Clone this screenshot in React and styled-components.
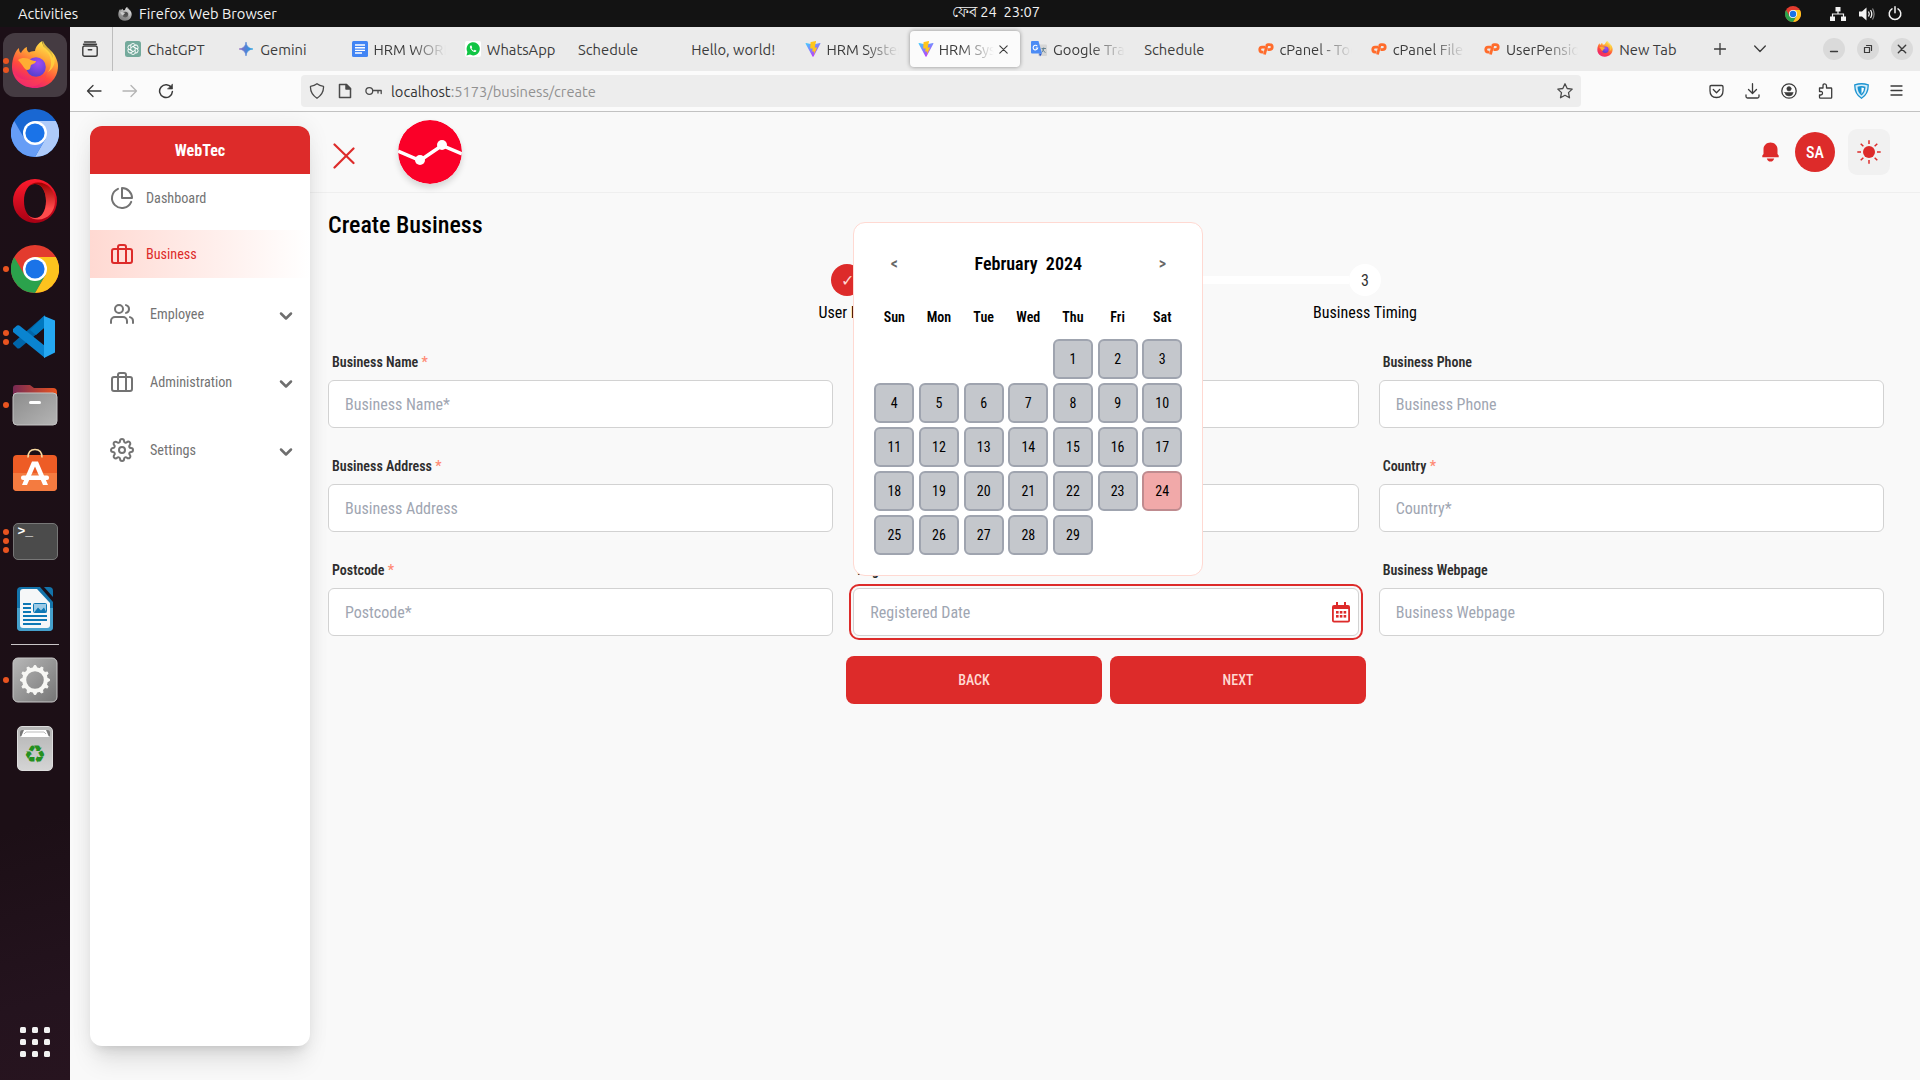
import React from "react";
import styled, { createGlobalStyle, css } from "styled-components";
import { FiPieChart, FiBriefcase, FiUsers, FiSettings, FiChevronDown } from "react-icons/fi";

const RED = "#dd2b2a";
const PALE = "#ffd9d2";

const GlobalStyle = createGlobalStyle`
  *, *::before, *::after { box-sizing: border-box; }
  html, body { margin: 0; padding: 0; }
  body { width: 1920px; height: 1080px; overflow: hidden; background: #f9f9f9; }
  button, input { font: inherit; border: 0; margin: 0; padding: 0; background: none; outline: none; }
  svg { display: block; flex: none; }
`;

/* ---------- desktop shell ---------- */

const Desktop = styled.div`
  display: flex;
  flex-direction: column;
  width: 1920px;
  height: 1080px;
  overflow: hidden;
  font-family: "Ubuntu", "Noto Sans", sans-serif;
  font-size: 14.67px;
`;

const TopBar = styled.header`
  display: grid;
  grid-template-columns: 1fr auto 1fr;
  align-items: center;
  height: 27px;
  flex: none;
  padding: 0 18px;
  background: #131313;
  color: #f2f2f2;
`;

const TopLeft = styled.div`
  display: flex;
  align-items: center;
  gap: 7px;
`;

const Activities = styled.span`
  width: 93px;
`;

const Clock = styled.div`
  white-space: pre;
  padding-left: 72px;
  padding-bottom: 1px;
`;

const Tray = styled.div`
  display: flex;
  justify-content: flex-end;
  align-items: center;
  gap: 13px;
`;

const TrayApp = styled.span`
  margin-right: 16px;
`;

const Body = styled.div`
  display: flex;
  flex: 1;
  min-height: 0;
`;

const Dock = styled.nav`
  display: flex;
  flex-direction: column;
  align-items: center;
  width: 70px;
  flex: none;
  padding-top: 4px;
  background: linear-gradient(165deg, #1c0f17 0%, #1c0f16 75%, #24131e 92%, #27141f 100%);
`;

const DockSlot = styled.div`
  position: relative;
  display: flex;
  align-items: center;
  justify-content: center;
  width: 70px;
  height: 68px;
  flex: none;
`;

const DockTile = styled.div`
  display: flex;
  align-items: center;
  justify-content: center;
  width: 64px;
  height: 64px;
  padding-bottom: ${(p) => p.$lift || 0}px;
  border-radius: 12px;
  background: ${(p) => (p.$active ? "#453b42" : "transparent")};
`;

const Dots = styled.div`
  position: absolute;
  left: 3px;
  top: 0;
  height: 68px;
  display: flex;
  flex-direction: column;
  justify-content: center;
  gap: 3px;
`;

const Dot = styled.i`
  width: 6px;
  height: 6px;
  border-radius: 50%;
  background: #e95420;
`;

const DockRule = styled.div`
  width: 48px;
  height: 1px;
  margin: 1px 0;
  background: #c9c5c7;
`;

const AppGrid = styled.div`
  display: grid;
  grid-template-columns: repeat(3, 6px);
  gap: 6px;
  margin-top: auto;
  margin-bottom: 23px;
`;

const GridDot = styled.i`
  width: 6px;
  height: 6px;
  border-radius: 1.5px;
  background: #f2f2f2;
`;

/* ---------- browser window ---------- */

const Browser = styled.div`
  display: flex;
  flex-direction: column;
  flex: 1;
  min-width: 0;
  color: #3b3b3b;
`;

const TabStrip = styled.div`
  display: flex;
  align-items: center;
  height: 44px;
  flex: none;
  background: #ebebeb;
`;

const FirefoxView = styled.div`
  display: flex;
  align-items: center;
  justify-content: center;
  width: 43px;
  height: 44px;
  padding-right: 2px;
  border-right: 1px solid #bdbdbd;
  margin-right: 4px;
`;

const Tabs = styled.div`
  display: flex;
  gap: 3px;
`;

const TabBox = styled.div`
  display: flex;
  align-items: center;
  gap: 6px;
  width: 110.25px;
  height: 36px;
  padding: 0 ${(p) => (p.$active ? 12 : 8)}px 0 8px;
  border-radius: 4px;
  ${(p) =>
    p.$active &&
    css`
      gap: 5px;
      background: #fbfbfb;
      box-shadow: 0 0 4px rgba(0, 0, 0, 0.4);
    `}
`;

const TabTitle = styled.span`
  flex: 1;
  min-width: 0;
  overflow: hidden;
  white-space: nowrap;
  padding-top: 2px;
  line-height: 20px;
  font-size: 14.75px;
  ${(p) =>
    p.$fade &&
    css`
      mask-image: linear-gradient(to left, transparent, #000 34px);
    `}
`;

const TabTools = styled.div`
  display: flex;
  align-items: center;
  gap: 28px;
  margin-left: 14px;
`;

const WindowButtons = styled.div`
  display: flex;
  gap: 12px;
  margin: 0 7px 0 auto;
`;

const WinButton = styled.span`
  display: flex;
  align-items: center;
  justify-content: center;
  width: 22px;
  height: 22px;
  border-radius: 50%;
  background: #dadada;
`;

const Toolbar = styled.div`
  display: flex;
  align-items: center;
  height: 41px;
  flex: none;
  padding: 0 17px 0 16px;
  background: #fbfbfb;
  border-bottom: 1px solid #c2c2c2;
`;

const NavButtons = styled.div`
  display: flex;
  align-items: center;
  gap: 20px;
  width: 215px;
`;

const UrlBox = styled.div`
  display: flex;
  align-items: center;
  width: 1280px;
  height: 32px;
  padding: 0 8px;
  border-radius: 4px;
  background: #ededed;
`;

const UrlIcons = styled.div`
  display: flex;
  align-items: center;
  gap: 12px;
  width: 82px;
`;

const Url = styled.span`
  flex: 1;
  color: #919191;
`;

const Host = styled.span`
  color: #333;
`;

const Extensions = styled.div`
  display: flex;
  align-items: center;
  justify-content: space-between;
  width: 194px;
  margin-left: auto;
`;

/* ---------- page ---------- */

const Page = styled.div`
  display: flex;
  flex: 1;
  min-height: 0;
  padding: 0 0 0 20px;
  background: #f9f9f9;
  font-family: "Roboto Condensed", "Roboto", sans-serif;
  color: #000;
`;

const Sidebar = styled.aside`
  position: relative;
  width: 220px;
  height: 920px;
  flex: none;
  margin-top: 14px;
  border-radius: 12px;
  background: #fff;
  box-shadow: 0 20px 25px -5px rgba(0, 0, 0, 0.1), 0 8px 10px -6px rgba(0, 0, 0, 0.1),
    0 0 22px rgba(0, 0, 0, 0.07);
`;

const Brand = styled.div`
  display: flex;
  align-items: center;
  justify-content: center;
  height: 48px;
  border-radius: 12px 12px 0 0;
  background: ${RED};
  color: #fff;
  font-size: 16px;
  font-weight: 700;
`;

const NavItem = styled.a`
  display: flex;
  align-items: center;
  height: 48px;
  padding: 0 14px 0 20px;
  margin-top: ${(p) => p.$gap || 0}px;
  font-size: 14.2px;
  color: ${(p) => (p.$active ? RED : "#737373")};
  background: ${(p) => (p.$active ? `linear-gradient(to right, ${PALE}, #fff)` : "none")};
`;

const NavText = styled.span`
  flex: 1;
  margin-left: ${(p) => p.$inset}px;
`;

const Caret = styled(FiChevronDown)`
  margin-top: 3px;
  stroke-width: 3;
  color: #6e6e6e;
`;

const Main = styled.main`
  display: flex;
  flex-direction: column;
  flex: 1;
  min-width: 0;
`;

const PageHeader = styled.div`
  display: flex;
  align-items: center;
  height: 81px;
  flex: none;
  padding: 0 30px 0 23px;
  border-bottom: 1px solid #efefef;
`;

const MenuToggle = styled.button`
  margin-top: 7px;
  margin-right: 43px;
`;

const Logo = styled.div`
  width: 64px;
  height: 64px;
  border-radius: 50%;
  margin-bottom: 1px;
  overflow: hidden;
  box-shadow: 0 4px 6px rgba(0, 0, 0, 0.14);
`;

const HeaderActions = styled.div`
  display: flex;
  align-items: center;
  margin-left: auto;
`;

const Avatar = styled.div`
  display: flex;
  align-items: center;
  justify-content: center;
  width: 40px;
  height: 40px;
  margin: 0 13px 0 16px;
  border-radius: 50%;
  background: ${RED};
  color: #fff;
  font-size: 16px;
  font-weight: 500;
`;

const ThemeButton = styled.button`
  display: flex;
  align-items: center;
  justify-content: center;
  width: 42px;
  height: 46px;
  border-radius: 9px;
  background: #f1f1f1;
`;

const Content = styled.section`
  padding: 16px 36px 0 18px;
`;

const Title = styled.h1`
  margin: 0;
  font-size: 24px;
  line-height: 32px;
  font-weight: 500;
`;

const Steps = styled.ol`
  display: grid;
  grid-template-columns: repeat(3, 259px);
  justify-content: center;
  list-style: none;
  margin: 19px 0 0;
  padding: 0;
`;

const StepItem = styled.li`
  display: grid;
  grid-template-rows: 40px 24px;
  justify-items: center;
  align-items: center;
  font-size: 16px;
`;

const Rail = styled.div`
  display: grid;
  grid-template-columns: 1fr 32px 1fr;
  align-items: center;
  width: 100%;
`;

const RailLine = styled.i`
  height: 8px;
  background: ${(p) => p.$color || "transparent"};
`;

const StepCircle = styled.span`
  display: flex;
  align-items: center;
  justify-content: center;
  width: 32px;
  height: 32px;
  border-radius: 50%;
  background: ${(p) => (p.$done ? RED : "#fff")};
  color: ${(p) => (p.$done ? PALE : "#333")};
`;

const Form = styled.form`
  display: grid;
  grid-template-columns: repeat(3, 1fr);
  gap: 20px;
  margin-top: 20px;
`;

const Field = styled.div`
  position: relative;
  display: flex;
  flex-direction: column;
  height: 84px;
`;

const Label = styled.label`
  height: 36px;
  padding: 8px 4px;
  font-size: 14px;
  line-height: 20px;
  font-weight: 600;
  color: #2e2e2e;
`;

const Star = styled.span`
  color: #ff8b75;
`;

const InputShell = styled.div`
  display: flex;
  align-items: center;
  height: 48px;
  padding: 0 8px 0 16px;
  border: 1px solid #d2d2d2;
  border-radius: 6px;
  background: #fff;
  ${(p) =>
    p.$focused &&
    css`
      outline: 2px solid ${RED};
      outline-offset: 2px;
    `}
`;

const Input = styled.input`
  flex: 1;
  min-width: 0;
  font-size: 16px;
  &::placeholder {
    color: #9fa6b2;
    opacity: 1;
  }
`;

const Actions = styled.div`
  display: flex;
  justify-content: center;
  gap: 8px;
  margin-top: 20px;
`;

const ActionButton = styled.button`
  width: 256px;
  height: 48px;
  border-radius: 8px;
  background: ${RED};
  color: ${PALE};
  font-size: 14px;
  font-weight: 500;
`;

/* ---------- date picker ---------- */

const Picker = styled.div`
  position: absolute;
  left: 0;
  bottom: 60px;
  z-index: 2;
  width: 350px;
  height: 354px;
  padding: 20px;
  border: 1px solid ${PALE};
  border-radius: 12px;
  background: #fff;
`;

const PickerHead = styled.div`
  display: grid;
  grid-template-columns: 40px 1fr 40px;
  align-items: center;
  justify-items: center;
  height: 40px;
  font-size: 18px;
  font-weight: 600;
  white-space: pre;
`;

const Arrow = styled.span`
  font-size: 16px;
  color: #666;
`;

const WeekGrid = styled.div`
  display: grid;
  grid-template-columns: repeat(7, 40px);
  justify-content: space-between;
  row-gap: 4px;
`;

const Weekday = styled.span`
  height: 40px;
  line-height: 40px;
  margin: 14px 0 -2px;
  text-align: center;
  font-size: 14px;
  font-weight: 600;
`;

const Day = styled.span`
  display: flex;
  align-items: center;
  justify-content: center;
  height: 40px;
  border-radius: 6px;
  border: 2px solid ${(p) => (p.$today ? "#bf8b8f" : "#9fa4af")};
  background: ${(p) => (p.$today ? "#f1a9a9" : "#c4c7cc")};
  font-size: 14px;
  grid-column-start: ${(p) => p.$start || "auto"};
`;

/* ---------- drawings ---------- */

const FirefoxIcon = ({ size = 48, mono }) => {
  const id = mono ? "ffm" : `ff${size}`;
  return (
    <svg width={size} height={size} viewBox="0 0 48 48">
      <defs>
        <linearGradient id={id} x1="0.8" y1="0" x2="0.3" y2="1">
          <stop offset="0" stopColor={mono ? "#eee" : "#fff44f"} />
          <stop offset="0.35" stopColor={mono ? "#bbb" : "#ffa436"} />
          <stop offset="0.65" stopColor={mono ? "#999" : "#ff4a3d"} />
          <stop offset="1" stopColor={mono ? "#777" : "#e31587"} />
        </linearGradient>
        <radialGradient id={`${id}p`} cx="0.6" cy="0.3" r="0.8">
          <stop offset="0" stopColor={mono ? "#444" : "#a24bf5"} />
          <stop offset="1" stopColor={mono ? "#666" : "#4a3fc8"} />
        </radialGradient>
      </defs>
      <path
        d="M45 17c-1-3-3-5-5-6 2 3 2 5 2 6C40 12 36 9 33 6c-1-2-2-4-1.500-6-4 2-7 6-7.500 10-3 0-5 1-6 1.500C16 10 15.500 8 16 6c-3 1-5 4-6 6-2-1-2-4-2-5C5 9 1 17 1 26c0 12 10 21 23 21s23-9 23-22c0-3-1-6-2-8z"
        fill={`url(#${id})`}
      />
      <circle cx="25" cy="26" r="9.800" fill={`url(#${id}p)`} />
      <path
        d="M7 19c4-3 10-2 13 0 2 1 5 1 5 1 0 2-3 3-5 4-1 2 0 5-4 5-3-1-4-5-9-10z"
        fill={mono ? "#ccc" : "#ffad33"}
      />
      <path
        d="M32 0c-1 5 2 8 5 12 4 6 4 14 0 19 6-3 9-12 5-19C39 8 34 5 32 0z"
        fill={mono ? "#ddd" : "#ffd43f"}
        opacity="0.8"
      />
      <path
        d="M2 30c3 6 9 9 16 9 9 0 15-3 18-9-1 10-9 16-18 16C10 45 4 39 2 30z"
        fill={mono ? "#888" : "#ff4152"}
        opacity="0.5"
      />
    </svg>
  );
};

const ChromeIcon = ({ size = 48, colors = ["#e33b2e", "#fcc31e", "#2ba24c"] }) => (
  <svg width={size} height={size} viewBox="0 0 48 48">
    <circle cx="24" cy="24" r="24" fill={colors[0]} />
    <path d="M24 12H44.800A24 24 0 0 1 24 48L34.400 30Z" fill={colors[1]} />
    <path d="M3.200 12A24 24 0 0 0 24 48L34.400 30H24L13.600 30Z" fill={colors[2]} />
    <circle cx="24" cy="24" r="12" fill="#fff" />
    <circle cx="24" cy="24" r="9.600" fill="#1a73e8" />
  </svg>
);

const OperaIcon = () => (
  <svg width="44" height="44" viewBox="0 0 44 44">
    <defs>
      <linearGradient id="opl" x1="0" y1="0" x2="0" y2="1">
        <stop offset="0" stopColor="#ff1b2d" />
        <stop offset="1" stopColor="#a70014" />
      </linearGradient>
      <linearGradient id="opr" x1="0" y1="0" x2="0" y2="1">
        <stop offset="0" stopColor="#9c0000" />
        <stop offset="0.700" stopColor="#ff4b4b" />
      </linearGradient>
    </defs>
    <path
      fillRule="evenodd"
      fill="url(#opl)"
      d="M22 0a22 22 0 1 0 0 44 22 22 0 0 0 0-44zM22 5c7 0 11 7.500 11 17s-4 17-11 17-11-7.500-11-17S15 5 22 5z"
    />
    <path
      fill="url(#opr)"
      fillRule="evenodd"
      d="M15 8c2-3 6-4.500 10-4.500 10 0 17 8 17 18.500S35 40.500 25 40.500c-4 0-8-1.500-10-4.500 2 2 4 3 7 3 7 0 11-7.500 11-17S29 5 22 5c-3 0-5 1-7 3z"
    />
  </svg>
);

const CodeIcon = () => (
  <svg width="44" height="44" viewBox="0 0 44 44">
    <path d="M0 29 4 33Q5 34 7 33L32 12V0L0 28z" fill="#0065a9" />
    <path d="M0 14 4 10.500Q6 10 7 11L32 31V43L0 17z" fill="#0a84d0" />
    <path d="M31 1 42 5.500V37.500L31 43Z" fill="#25a8f2" />
    <path d="M31 1 17 15l6 5 8-7z" fill="#0078c0" />
  </svg>
);

const FilesIcon = () => (
  <svg width="46" height="42" viewBox="0 0 46 42">
    <defs>
      <linearGradient id="fo">
        <stop offset="0" stopColor="#772953" />
        <stop offset="1" stopColor="#e95420" />
      </linearGradient>
      <linearGradient id="fg" x1="0" y1="0" x2="1" y2="1">
        <stop offset="0" stopColor="#8c8c8c" />
        <stop offset="1" stopColor="#b5b5b5" />
      </linearGradient>
    </defs>
    <path d="M1 20V4q0-3 3-3h14l4 3h19q4 0 4 4v12z" fill="url(#fo)" />
    <rect x="1" y="9" width="44" height="32" rx="4" fill="url(#fg)" stroke="#c4c4c4" />
    <rect x="17" y="17" width="12" height="3" rx="1.500" fill="#fff" />
  </svg>
);

const SoftwareIcon = () => (
  <svg width="46" height="44" viewBox="0 0 46 44">
    <rect x="1" y="7" width="44" height="36" rx="4" fill="#ee5c25" />
    <path d="M1 25h44v14q0 4-4 4H5q-4 0-4-4z" fill="#f47b40" />
    <path d="M16 9.500Q16 1.500 23 1.500t7 8" fill="none" stroke="#f8d9a0" strokeWidth="1.600" />
    <path d="M20 13.500h6L36 37h-5L23 18.500 15 37h-5z" fill="#fff" />
    <rect x="9" y="27.500" width="28" height="4.500" rx="2" fill="#fff" />
  </svg>
);

const TermTile = styled.span`
  width: 45px;
  height: 37px;
  border-radius: 5px;
  border: 1px solid #777;
  background: #4b4b4b;
  color: #fff;
  font: 700 13px/16px "Liberation Mono", monospace;
  padding-left: 4px;
`;

const WriterIcon = () => (
  <svg width="38" height="46" viewBox="0 0 38 46">
    <rect x="1" y="1" width="36" height="44" rx="4" fill="#1374ab" />
    <path d="M1 22h36v19q0 4-4 4H5q-4 0-4-4z" fill="#45a0cc" />
    <path d="M4 6q0-3 3-3h14l13 14v22q0 3-3 3H7q-3 0-3-3z" fill="#f5f7f8" />
    <path d="M24 1h4l9 10v5z" fill="#1c0f17" />
    <path d="M7 18h8M7 22h8M7 26h8M7 30h24M7 34h24M7 38h18" stroke="#0d78b5" strokeWidth="2" />
    <rect x="17.500" y="17.500" width="13" height="9" rx="1" fill="#9dcbe6" stroke="#0d78b5" />
    <path d="m18 26.500 4-5 3 3 3-3 2.500 5z" fill="#0d78b5" />
  </svg>
);

const SettingsIcon = () => (
  <svg width="46" height="46" viewBox="0 0 46 46">
    <defs>
      <linearGradient id="sg" x1="0" y1="0" x2="1" y2="1">
        <stop offset="0" stopColor="#b8b8b8" />
        <stop offset="1" stopColor="#757575" />
      </linearGradient>
    </defs>
    <rect x="1" y="1" width="44" height="44" rx="5" fill="url(#sg)" stroke="#c8c8c8" />
    <circle cx="23" cy="23" r="10.800" fill="none" stroke="#f7f7f4" strokeWidth="4" />
    {Array.from({ length: 12 }, (_, i) => (
      <path key={i} d="m21.300 11 .9-2.500h1.600l.9 2.500z" fill="#f7f7f4" stroke="#f7f7f4" transform={`rotate(${i * 30} 23 23)`} />
    ))}
  </svg>
);

const TrashShell = styled.span`
  display: flex;
  flex-direction: column;
  align-items: center;
  width: 36px;
  height: 45px;
  padding-top: 2px;
  border-radius: 5px;
  border: 1px solid #dcdcdc;
  background: linear-gradient(#b4b4b4, #d4d4d4);
`;

const RecycleMark = styled.span`
  margin-top: 4px;
  color: #25901f;
  font: 25px/28px "DejaVu Sans", sans-serif;
`;

const TrashIcon = () => (
  <TrashShell>
    <svg width="30" height="8" viewBox="0 0 30 8">
      <path d="M0 7V4q0-3 3-3h24q3 0 3 3v3z" fill="#777" />
      <path d="M1 8 4 1h22l3 7z" fill="#fff" />
      <path d="M4 5l2-2h18l2 2" stroke="#aaa" fill="none" strokeWidth="0.800" />
    </svg>
    <RecycleMark>♻</RecycleMark>
  </TrashShell>
);

const ViteIcon = () => (
  <svg width="16" height="16" viewBox="0 0 32 32">
    <defs>
      <linearGradient id="vt" x1="0" y1="0" x2="0.600" y2="1">
        <stop offset="0" stopColor="#41d1ff" />
        <stop offset="1" stopColor="#bd34fe" />
      </linearGradient>
    </defs>
    <path d="M1 5 15 31q1 1 2 0L31 5q0-1-1-1l-14 3L2 4q-1 0-1 1z" fill="url(#vt)" />
    <path d="M22 0 12 2q-1 0-1 1l-.6 12h5l-1 6h4l-1 7 7-15h-5l2.600-12z" fill="#ffc61c" />
  </svg>
);

const CpanelIcon = () => (
  <svg width="16" height="16" viewBox="0 0 32 32">
    <path d="M14 12H8q-4.500 0-4.500 5t4.500 5h3" fill="none" stroke="#ff6c2c" strokeWidth="5.500" />
    <path d="m13 27 5-19q1-1 2-1h3q5.500 0 5.500 5t-5.500 5h-4" fill="none" stroke="#ff6c2c" strokeWidth="5.500" />
  </svg>
);

const ChatIcon = () => (
  <svg width="16" height="16" viewBox="0 0 16 16">
    <rect width="16" height="16" rx="2.500" fill="#74aa9c" />
    <g fill="none" stroke="#fff" strokeWidth="0.900">
      {[0, 60, 120, 180, 240, 300].map((a) => (
        <path key={a} d="M8 5.500 5.800 6.800V4.200Q6 2.500 8 2.500t2.500 2" transform={`rotate(${a} 8 8)`} />
      ))}
    </g>
  </svg>
);

const GeminiIcon = () => (
  <svg width="16" height="16" viewBox="0 0 16 16">
    <defs>
      <linearGradient id="gm">
        <stop offset="0" stopColor="#9168c0" />
        <stop offset="0.550" stopColor="#4a85d8" />
        <stop offset="1" stopColor="#1ba1e3" />
      </linearGradient>
    </defs>
    <path d="M8 1Q8.600 7.400 15 8 8.600 8.600 8 15 7.400 8.600 1 8 7.400 7.400 8 1z" fill="url(#gm)" stroke="url(#gm)" strokeWidth="0.600" />
  </svg>
);

const DocsIcon = () => (
  <svg width="16" height="16" viewBox="0 0 16 16">
    <rect width="16" height="16" rx="1.500" fill="#4285f4" />
    <path d="M3 4h10M3 6.700h10M3 9.400h10M3 12h7" stroke="#fff" strokeWidth="1.400" />
  </svg>
);

const WhatsIcon = () => (
  <svg width="16" height="16" viewBox="0 0 16 16">
    <rect width="16" height="16" rx="2" fill="#fff" />
    <path d="M1.500 14.500 2.400 11A6.600 6.600 0 1 1 5 13.600z" fill="#10c544" />
    <path d="M5.500 4.500q-1.400 1 0 3.300 1.500 2.500 3.700 3.200 1.800.4 2.300-1.200L9.700 8.800l-.9.900Q7.200 9 6.500 7.300l.7-.8-.7-2z" fill="#fff" />
  </svg>
);

const TranslateIcon = () => (
  <svg width="16" height="16" viewBox="0 0 16 16">
    <rect x="7" y="3.500" width="9" height="11.500" rx="1" fill="#d6d6d6" />
    <path d="M10.500 7.500h4.500M12.700 6.500v1q-.4 2.500-2 4M11.500 8.500q1 2 3 3" stroke="#5f7d8c" strokeWidth="0.900" fill="none" />
    <path d="m8 12.500 3 0-2 3z" fill="#2a56c6" />
    <path d="M1 0h6.500l3.500 12.500H1q-1 0-1-1V1q0-1 1-1z" fill="#4b8bf5" />
    <path d="M6.300 5.200A2.300 2.300 0 1 0 6.700 7H4.700" stroke="#fff" strokeWidth="1.100" fill="none" />
  </svg>
);

const Line = ({ w = 16, h = 16, box, color = "#3b3b3b", sw = 1.3, children }) => (
  <svg
    width={w}
    height={h}
    viewBox={box || `0 0 ${w} ${h}`}
    fill="none"
    stroke={color}
    strokeWidth={sw}
    strokeLinecap="round"
    strokeLinejoin="round"
  >
    {children}
  </svg>
);

const SunIcon = () => (
  <svg width="24" height="24" viewBox="0 0 24 24">
    <circle cx="12" cy="12" r="6" fill={RED} />
    {[0, 45, 90, 135, 180, 225, 270, 315].map((a) => (
      <path key={a} d="M12 0.300V4" stroke={RED} strokeWidth="1.500" transform={`rotate(${a} 12 12)`} />
    ))}
  </svg>
);

const BellIcon = () => (
  <svg width="17" height="20" viewBox="0 0 17 20" fill={RED}>
    <path d="M8.500.5C4.600.5 1.500 3.300 1.500 7.300V12L.3 13.600V15.200H16.700V13.600L15.500 12V7.300C15.500 3.300 12.400.5 8.500.5z" />
    <path d="M4.800 16.500h7.400Q11.400 19.600 8.500 19.600T4.800 16.500z" />
  </svg>
);

const CalendarIcon = () => (
  <svg width="18" height="21" viewBox="0 0 18 21" fill={RED}>
    <path d="M4 0h2v3h6V0h2v3h2q2 0 2 2v13.500q0 2-2 2H2q-2 0-2-2V5q0-2 2-2h2z" />
    <path d="M1.800 7h14.400v11.700H1.800z" fill="#fff" />
    {[9, 13].map((y) => [4, 7.8, 11.6].map((x) => <rect key={`${x}-${y}`} x={x} y={y} width="2.600" height="2.600" />))}
  </svg>
);

/* ---------- data ---------- */

const dockApps = [
  { icon: <FirefoxIcon />, dots: 2, active: true },
  { icon: <ChromeIcon colors={["#1967d2", "#aecbfa", "#669df6"]} />, dots: 0 },
  { icon: <OperaIcon />, dots: 0 },
  { icon: <ChromeIcon />, dots: 1 },
  { icon: <CodeIcon />, dots: 2 },
  { icon: <FilesIcon />, dots: 1 },
  { icon: <SoftwareIcon />, dots: 0, lift: 6 },
  { icon: <TermTile>&gt;_</TermTile>, dots: 3 },
  { icon: <WriterIcon />, dots: 0 },
];

const tabs = [
  { title: "ChatGPT", icon: <ChatIcon /> },
  { title: "Gemini", icon: <GeminiIcon /> },
  { title: "HRM WORK", icon: <DocsIcon />, fade: true },
  { title: "WhatsApp", icon: <WhatsIcon /> },
  { title: "Schedule" },
  { title: "Hello, world!" },
  { title: "HRM System", icon: <ViteIcon />, fade: true },
  { title: "HRM System", icon: <ViteIcon />, fade: true, active: true },
  { title: "Google Translate", icon: <TranslateIcon />, fade: true },
  { title: "Schedule" },
  { title: "cPanel - Tools", icon: <CpanelIcon />, fade: true },
  { title: "cPanel File M", icon: <CpanelIcon />, fade: true },
  { title: "UserPension", icon: <CpanelIcon />, fade: true },
  { title: "New Tab", icon: <FirefoxIcon size={16} /> },
];

const menu = [
  { text: "Dashboard", icon: FiPieChart },
  { text: "Business", icon: FiBriefcase, active: true, gap: 8 },
  { text: "Employee", icon: FiUsers, gap: 12, more: true },
  { text: "Administration", icon: FiBriefcase, gap: 20, more: true },
  { text: "Settings", icon: FiSettings, gap: 20, more: true },
];

const fields = [
  { label: "Business Name", hint: "Business Name*", required: true },
  { label: "", hint: "" },
  { label: "Business Phone", hint: "Business Phone" },
  { label: "Business Address", hint: "Business Address", required: true },
  { label: "", hint: "" },
  { label: "Country", hint: "Country*", required: true },
  { label: "Postcode", hint: "Postcode*", required: true },
  { label: "Registered Date", hint: "Registered Date", date: true },
  { label: "Business Webpage", hint: "Business Webpage" },
];

const weekdays = ["Sun", "Mon", "Tue", "Wed", "Thu", "Fri", "Sat"];

/* ---------- sections ---------- */

const DockItem = ({ icon, dots, active, lift }) => (
  <DockSlot>
    <Dots>
      {Array.from({ length: dots }, (_, i) => (
        <Dot key={i} />
      ))}
    </Dots>
    <DockTile $active={active} $lift={lift}>
      {icon}
    </DockTile>
  </DockSlot>
);

const DatePicker = () => (
  <Picker>
    <PickerHead>
      <Arrow>&lt;</Arrow>
      <span>{"February  2024"}</span>
      <Arrow>&gt;</Arrow>
    </PickerHead>
    <WeekGrid>
      {weekdays.map((d) => (
        <Weekday key={d}>{d}</Weekday>
      ))}
      {Array.from({ length: 29 }, (_, i) => (
        <Day key={i} $start={i === 0 ? 5 : undefined} $today={i === 23}>
          {i + 1}
        </Day>
      ))}
    </WeekGrid>
  </Picker>
);

const BrowserChrome = () => (
  <>
    <TabStrip>
      <FirefoxView>
        <Line w={16} h={16} sw={1.4}>
          <path d="M2.500 1h11M1.500 3.300h13" />
          <rect x="0.800" y="5" width="14.400" height="10.200" rx="1.800" />
          <path d="M6.300 8.700h3.400" />
        </Line>
      </FirefoxView>
      <Tabs>
        {tabs.map((t, i) => (
          <TabBox key={i} $active={t.active}>
            {t.icon}
            <TabTitle $fade={t.fade}>{t.title}</TabTitle>
            {t.active && (
              <Line w={9} h={9} sw={1.1}>
                <path d="m0.800.8 7.400 7.400M8.200.8.8 8.200" />
              </Line>
            )}
          </TabBox>
        ))}
      </Tabs>
      <TabTools>
        <Line w={12} h={12} sw={1.3}>
          <path d="M6 .5v11M.5 6h11" />
        </Line>
        <Line w={12} h={8} sw={1.3}>
          <path d="m.7 1 5.300 5.500L11.300 1" />
        </Line>
      </TabTools>
      <WindowButtons>
        <WinButton>
          <Line w={10} h={10} sw={1.3}>
            <path d="M1.500 7.500h7" />
          </Line>
        </WinButton>
        <WinButton>
          <Line w={10} h={10} sw={1.2}>
            <path d="M1.500 3.500h5v5h-5zM3.500 1.500h5v5" />
          </Line>
        </WinButton>
        <WinButton>
          <Line w={10} h={10} sw={1.4}>
            <path d="m1.300 1.300 7.400 7.400M8.700 1.300 1.300 8.700" />
          </Line>
        </WinButton>
      </WindowButtons>
    </TabStrip>
    <Toolbar>
      <NavButtons>
        <Line>
          <path d="M15 8H1.500M7 2.500 1.500 8 7 13.500" />
        </Line>
        <Line color="#b4b4b4">
          <path d="M1 8h13.500M9 2.500 14.500 8 9 13.500" />
        </Line>
        <Line sw={1.5}>
          <path d="M13.500 4.800A6.400 6.400 0 1 0 14.400 8.500" />
          <path d="M14.500 1.300V6H9.800z" fill="#3b3b3b" strokeWidth="0.600" />
        </Line>
      </NavButtons>
      <UrlBox>
        <UrlIcons>
          <Line color="#4a4a4a">
            <path d="M8 .8Q10.500 3 14.500 3.300 15 10.500 8 15.300 1 10.500 1.500 3.300 5.500 3 8 .8z" />
          </Line>
          <Line color="#4a4a4a" sw={1.5}>
            <path d="M2.500 1.500h7l4 4v9h-11z" />
            <path d="M9 1.500v4.500h4.500z" fill="#4a4a4a" />
          </Line>
          <Line w={17} color="#4a4a4a">
            <circle cx="4.300" cy="8" r="3.400" />
            <path d="M7.800 7.500h8.400v3M13 7.500v2.500" />
          </Line>
        </UrlIcons>
        <Url>
          <Host>localhost</Host>:5173/business/create
        </Url>
        <Line color="#4a4a4a">
          <path d="m8 .8 2.200 4.700 5 .6-3.700 3.500 1 5.200L8 12.300l-4.500 2.500 1-5.200L.8 6.100l5-.6z" />
        </Line>
      </UrlBox>
      <Extensions>
        <Line w={15} h={15}>
          <path d="M2.300 1.500h10.400q1.300 0 1.300 1.300v4Q14 13.500 7.500 13.500T1 6.800v-4q0-1.300 1.300-1.300zM4.300 5.500 7.500 8.700l3.200-3.200" />
        </Line>
        <Line w={15} h={16}>
          <path d="M7.500.7v9.500M3.500 6.500l4 4 4-4M1 12v1.500Q1 15 2.500 15h10q1.500 0 1.500-1.500V12" />
        </Line>
        <Line>
          <circle cx="8" cy="8" r="7.200" />
          <circle cx="8" cy="5.800" r="2.200" fill="#3b3b3b" strokeWidth="0.500" />
          <path d="M3.800 9.500h8.400Q11.500 13 8 13T3.800 9.500z" fill="#3b3b3b" strokeWidth="0.500" />
        </Line>
        <Line w={15}>
          <path d="M1.500 5H5V2.700Q5 .8 6.700.8T8.500 2.700V5H13q.7 0 .7.700v8.600q0 .9-.7.900H2.500q-1 0-1-1V12h1.300Q4.500 12 4.500 10.200T2.800 8.500H1.500z" />
        </Line>
        <svg width="15" height="16" viewBox="0 0 15 16">
          <path d="M.8 1.800Q7.500-.3 14.200 1.800 14.500 11 7.500 15.300.5 11 .8 1.800z" fill="#d7eef9" stroke="#1b93d1" strokeWidth="1.300" />
          <path d="M3.500 3.700q4-1.200 8 0 0 5.500-4 8.800-4-3.300-4-8.800z" fill="#1b93d1" />
          <path d="M7.500 4.500q1.500 0 2.500.4 0 3.500-2.500 6z" fill="#fff" />
        </svg>
        <Line w={13} h={14}>
          <path d="M1 2h11M1 6.500h11M1 11h11" />
        </Line>
      </Extensions>
    </Toolbar>
  </>
);

const SidebarMenu = () => (
  <Sidebar>
    <Brand>WebTec</Brand>
    {menu.map(({ text, icon: Icon, active, gap, more }) => (
      <NavItem key={text} $active={active} $gap={gap}>
        <Icon size={24} />
        <NavText $inset={more ? 16 : 12}>{text}</NavText>
        {more && <Caret size={20} />}
      </NavItem>
    ))}
  </Sidebar>
);

const Header = () => (
  <PageHeader>
    <MenuToggle>
      <Line w={22} h={26} color={RED} sw={2.2}>
        <path d="M1.500 1.500 20.500 20M1.500 24.500 20.500 5.500" />
      </Line>
    </MenuToggle>
    <Logo>
      <svg width="64" height="64" viewBox="0 0 64 64">
        <circle cx="32" cy="32" r="32" fill="#fa0028" />
        <path d="M0 31 22 40.500 44 25.500 64 34" fill="none" stroke="#fff" strokeWidth="3.500" />
        <circle cx="22" cy="40" r="5" fill="#fff" />
        <circle cx="44" cy="25" r="5" fill="#fff" />
      </svg>
    </Logo>
    <HeaderActions>
      <BellIcon />
      <Avatar>SA</Avatar>
      <ThemeButton>
        <SunIcon />
      </ThemeButton>
    </HeaderActions>
  </PageHeader>
);

export default function App() {
  return (
    <Desktop>
      <GlobalStyle />
      <TopBar>
        <TopLeft>
          <Activities>Activities</Activities>
          <FirefoxIcon size={14} mono />
          <span>Firefox Web Browser</span>
        </TopLeft>
        <Clock>{"ফেব 24  23:07"}</Clock>
        <Tray>
          <TrayApp>
            <ChromeIcon size={16} />
          </TrayApp>
          <svg width="16" height="14" viewBox="0 0 16 14" fill="#f2f2f2">
            <path d="M5.500 0h5v4.500h-5zM0 9.500h5V14H0zM11 9.500h5V14h-5z" />
            <path d="M8 4v3M2.500 10V7h11v3" fill="none" stroke="#f2f2f2" strokeWidth="1.200" />
          </svg>
          <svg width="16" height="14" viewBox="0 0 16 14">
            <path d="M0 4.500h3L7.500.5v13L3 9.500H0z" fill="#f2f2f2" />
            <path d="M9.500 4.500q1.600 2.500 0 5M11.500 3q2.600 4 0 8" fill="none" stroke="#f2f2f2" strokeWidth="1.300" />
            <path d="M13.500 1.500q3.200 5.500 0 11" fill="none" stroke="#888" strokeWidth="1.200" />
          </svg>
          <Line w={14} h={15} color="#f2f2f2" sw={1.5}>
            <path d="M7 .8v6M4 2.800a5.800 5.800 0 1 0 6 0" />
          </Line>
        </Tray>
      </TopBar>
      <Body>
        <Dock>
          {dockApps.map((a, i) => (
            <DockItem key={i} {...a} />
          ))}
          <DockRule />
          <DockItem icon={<SettingsIcon />} dots={1} />
          <DockItem icon={<TrashIcon />} dots={0} />
          <AppGrid>
            {Array.from({ length: 9 }, (_, i) => (
              <GridDot key={i} />
            ))}
          </AppGrid>
        </Dock>
        <Browser>
          <BrowserChrome />
          <Page>
            <SidebarMenu />
            <Main>
              <Header />
              <Content>
                <Title>Create Business</Title>
                <Steps>
                  <StepItem>
                    <Rail>
                      <RailLine />
                      <StepCircle $done>✓</StepCircle>
                      <RailLine $color={RED} />
                    </Rail>
                    User Info
                  </StepItem>
                  <StepItem>
                    <Rail>
                      <RailLine $color={RED} />
                      <StepCircle $done />
                      <RailLine $color="#fff" />
                    </Rail>
                  </StepItem>
                  <StepItem>
                    <Rail>
                      <RailLine $color="#fff" />
                      <StepCircle>3</StepCircle>
                      <RailLine />
                    </Rail>
                    Business Timing
                  </StepItem>
                </Steps>
                <Form>
                  {fields.map((f, i) => (
                    <Field key={i}>
                      <Label>
                        {f.label} {f.required && <Star>*</Star>}
                      </Label>
                      <InputShell $focused={f.date}>
                        <Input placeholder={f.hint} />
                        {f.date && <CalendarIcon />}
                      </InputShell>
                      {f.date && <DatePicker />}
                    </Field>
                  ))}
                </Form>
                <Actions>
                  <ActionButton type="button">BACK</ActionButton>
                  <ActionButton type="button">NEXT</ActionButton>
                </Actions>
              </Content>
            </Main>
          </Page>
        </Browser>
      </Body>
    </Desktop>
  );
}
